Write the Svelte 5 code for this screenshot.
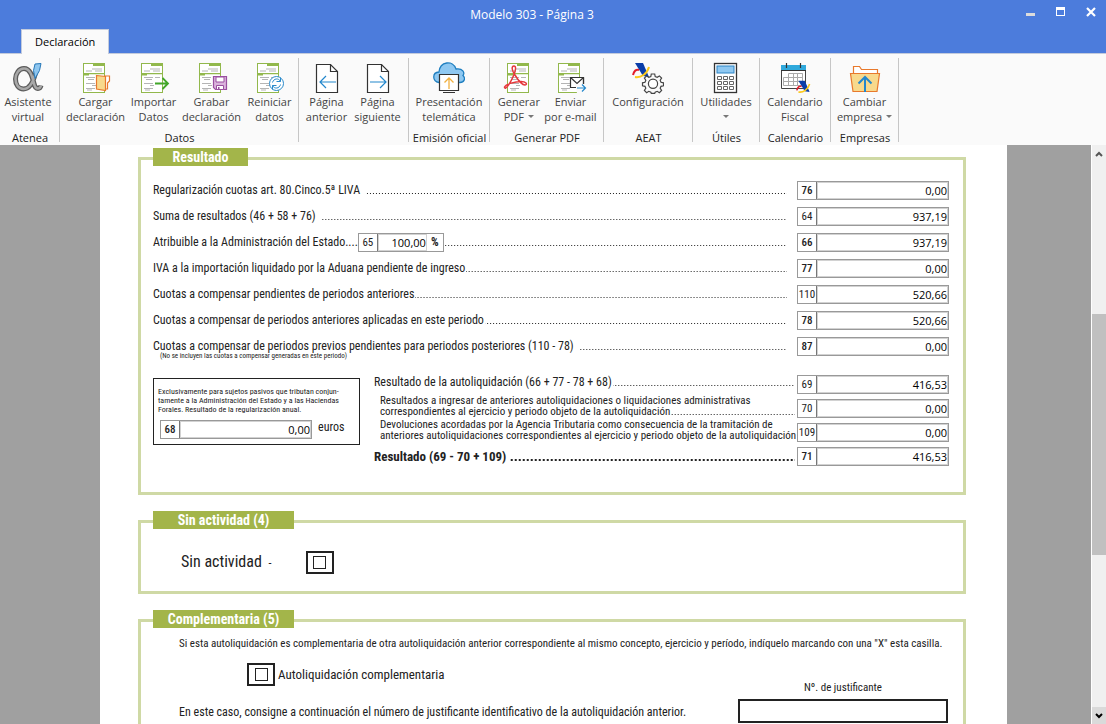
<script>
  const groups = [
    {
      name: "Atenea",
      size: "g60",
      tools: [{ icon: "alpha", lines: ["Asistente", "virtual"] }],
    },
    {
      name: "Datos",
      size: "g239",
      tools: [
        { icon: "load", lines: ["Cargar", "declaración"] },
        { icon: "import", lines: ["Importar", "Datos"] },
        { icon: "save", lines: ["Grabar", "declaración"] },
        { icon: "reset", lines: ["Reiniciar", "datos"] },
      ],
    },
    {
      name: "",
      size: "g110",
      tools: [
        { icon: "prev", lines: ["Página", "anterior"] },
        { icon: "next", lines: ["Página", "siguiente"] },
      ],
    },
    {
      name: "Emisión oficial",
      size: "g81",
      tools: [{ icon: "cloud", lines: ["Presentación", "telemática"] }],
    },
    {
      name: "Generar PDF",
      size: "g114",
      tools: [
        { icon: "pdf", lines: ["Generar", "PDF"], menu: true },
        { icon: "mail", lines: ["Enviar", "por e-mail"] },
      ],
    },
    {
      name: "AEAT",
      size: "g89",
      tools: [{ icon: "config", lines: ["Configuración", ""] }],
    },
    {
      name: "Útiles",
      size: "g67",
      tools: [{ icon: "calc", lines: ["Utilidades", ""], menu: true }],
    },
    {
      name: "Calendario",
      size: "g71",
      tools: [{ icon: "calendar", lines: ["Calendario", "Fiscal"] }],
    },
    {
      name: "Empresas",
      size: "g68",
      tools: [{ icon: "company", lines: ["Cambiar", "empresa"], menu: true }],
    },
  ];

  const results = [
    { box: "76", label: "Regularización cuotas art. 80.Cinco.5ª LIVA", value: "0,00", space: true, strong: true },
    { box: "64", label: "Suma de resultados (46 + 58 + 76)", value: "937,19", space: true },
    { box: "66", label: "Atribuible a la Administración del Estado", value: "937,19", percent: "100,00", strong: true },
    { box: "77", label: "IVA a la importación liquidado por la Aduana pendiente de ingreso", value: "0,00", strong: true },
    { box: "110", label: "Cuotas a compensar pendientes de periodos anteriores", value: "520,66" },
    { box: "78", label: "Cuotas a compensar de periodos anteriores aplicadas en este periodo", value: "520,66", strong: true },
    { box: "87", label: "Cuotas a compensar de periodos previos pendientes para periodos posteriores (110 - 78)", value: "0,00", space: true, strong: true },
  ];

  const totals = [
    { box: "69", lines: ["Resultado de la autoliquidación (66 + 77 - 78 + 68)"], value: "416,53", dots: true },
    {
      box: "70",
      lines: [
        "Resultados a ingresar de anteriores autoliquidaciones o liquidaciones administrativas",
        "correspondientes al ejercicio y periodo objeto de la autoliquidación",
      ],
      value: "0,00",
      dots: true,
    },
    {
      box: "109",
      lines: [
        "Devoluciones acordadas por la Agencia Tributaria como consecuencia de la tramitación de",
        "anteriores autoliquidaciones correspondientes al ejercicio y periodo objeto de la autoliquidación",
      ],
      value: "0,00",
    },
    { box: "71", lines: ["Resultado (69 - 70 + 109)"], value: "416,53", dots: true, final: true },
  ];
</script>

{#snippet sheet()}
  <rect x="3.5" y="1.5" width="21" height="29" fill="#fff" stroke="#92b84c" />
  <path d="M13 1h12v3H13zM4 12h5v1.5H4zM4 11h20v1.2H4z" fill="#92b84c" />
  <path
    d="M12 7h10M6 9h6M15 9h7M6 15.5h9M8 17.5h6M17 15.5h5M6 21.5h9M12 23.5h4M6 26.5h9M7 28h5"
    stroke="#b5b5b5"
    fill="none"
  />
{/snippet}

{#snippet eagle()}
  <path d="M3 1h8l6 14-6-1z" fill="#0a3da8" />
  <path d="M1 13c1-4 3-6 6-5" fill="none" stroke="#e21e2b" stroke-width="2" />
  <path d="M3 15c6 1 12-3 14-10" fill="none" stroke="#fbc91b" stroke-width="2" />
{/snippet}

{#snippet icon(name)}
  <svg class="icon" viewBox="0 0 32 32" aria-hidden="true">
    {#if name === "alpha"}
      <path
        d="M23.5 11c-2 8-5.500 16-12 16C6.500 27 3.500 22.500 3.500 17S7 6.500 12 6.500c6 0 8 7 10 15 .6 3 2 5 4 5 1.500 0 2.500-1 3-3"
        fill="none"
        stroke="#5b5b5b"
        stroke-width="5"
      />
      <path
        d="M23.500 11c-2 8-5.500 16-12 16C6.500 27 3.500 22.500 3.500 17S7 6.500 12 6.500c6 0 8 7 10 15 .6 3 2 5 4 5 1.500 0 2.500-1 3-3"
        fill="none"
        stroke="#a8a8a8"
        stroke-width="2.500"
      />
      <path d="M23 2 29 1.500l-1.500 7-4.500 8-1.500-8z" fill="#8ec6ef" stroke="#2778b8" />
    {:else if name === "load"}
      {@render sheet()}
      <path d="M25 14h4.500v5l-2 2v6H25z" fill="#fff" stroke="#e8792c" stroke-width="1.200" />
      <path d="m16.500 13.500 9 1v14l-9-1.500z" fill="#f8d98c" stroke="#e8792c" stroke-width="1.200" />
    {:else if name === "import"}
      {@render sheet()}
      <path d="M17 21.500h13M24.500 16l5.500 5.500-5.500 5.500" fill="none" stroke="#42a62a" stroke-width="1.800" />
    {:else if name === "save"}
      {@render sheet()}
      <path d="M17.500 14.500h13v13H19.500l-2-2z" fill="#dab3dc" stroke="#9a4fa0" stroke-width="1.200" />
      <path d="M20 15h8v5h-8zM20.500 23.500h7v4h-7z" fill="#fff" stroke="#9a4fa0" />
      <path d="M22 25h1.500v2H22z" fill="#9a4fa0" />
    {:else if name === "reset"}
      {@render sheet()}
      <circle cx="22.500" cy="21.500" r="7" fill="#fff" stroke="#2a8acb" />
      <path
        d="M18.500 20.500c1-4 6-5 8-1M26.500 15.500v4h-4M26.500 22.500c-1 4-6 5-8 1M18.500 27.500v-4h4"
        fill="none"
        stroke="#2a8acb"
      />
    {:else if name === "prev" || name === "next"}
      <path d="M5.500 2.500h14l7 7v21h-21z" fill="#fff" stroke="#333" stroke-width="1.200" />
      <path d="M19.500 2.500v7h7" fill="none" stroke="#333" stroke-width="1.200" />
      {#if name === "prev"}
        <path d="M25 20H9.500M15 14l-6 6 6 6" fill="none" stroke="#2387cc" stroke-width="1.200" />
      {:else}
        <path d="M8 20h15.500M18 14l6 6-6 6" fill="none" stroke="#2387cc" stroke-width="1.200" />
      {/if}
    {:else if name === "cloud"}
      <path
        d="M6 20.500c-7-1.500-7-10 0-10.500 1-11 14-12 17-3 7-1 9 4 7 6.500 3 3 1 7-3 7z"
        fill="#8fc8f1"
        stroke="#1f7fc0"
        stroke-width="1.300"
      />
      <path d="M6.500 12.500h19v16h-19z" fill="#fff" stroke="#333" stroke-width="1.200" />
      <path d="M10 30.500h12" stroke="#333" />
      <path d="M16 27V16.500M11.500 20.500l4.500-4.500 4.500 4.500" fill="none" stroke="#f0b040" stroke-width="1.300" />
    {:else if name === "pdf"}
      <g transform="translate(1 0)">{@render sheet()}</g>
      <path
        d="M11 4c-3 0-2 5 1 9 3 5 7 10 10 10 3-.5 1-3.500-4-3.500C12 19.500 3 22 1.500 25c0 2 2 1.500 4-2C9 18 13 9 12.500 6c0-1.300-.7-2-1.500-2z"
        fill="none"
        stroke="#e5383b"
        stroke-width="1.500"
      />
    {:else if name === "mail"}
      {@render sheet()}
      <path d="M15.500 15.500h13v10h-13z" fill="#fff" stroke="#333" stroke-width="1.200" />
      <path d="m15.500 15.500 6.500 6 6.500-6" fill="none" stroke="#333" stroke-width="1.200" />
      <path d="M20 22h11v9h-9z" fill="#fafafa" />
      <path d="M15.500 25.500H21M28.500 15.500V22" stroke="#333" stroke-width="1.200" />
      <path d="M22 26h8.500M27 22.500l3.500 3.500-3.500 3.500" fill="none" stroke="#2387cc" stroke-width="1.200" />
    {:else if name === "config"}
      {@render eagle()}
      <path
        d="m19.300 12 3.400 0 .5 2.500 2 .8 2.200-1.400 2.200 2.200-1.400 2.200.8 2 2.500.5v3l-2.500.5-.8 2 1.400 2.200-2.200 2.200-2.200-1.400-2 .8-.5 1.200h-3.400l-.5-1.200-2-.8-2.200 1.400-2.200-2.200 1.400-2.200-.8-2-2.500-.5v-3l2.500-.5.8-2-1.400-2.200 2.200-2.200 2.200 1.400 2-.8z"
        fill="#fafafa"
        stroke="#444"
        stroke-width="1.200"
      />
      <circle cx="21" cy="21.800" r="4.600" fill="#fff" stroke="#444" stroke-width="1.200" />
    {:else if name === "calc"}
      <rect x="4.500" y="1.500" width="22" height="29" fill="#fff" stroke="#333" stroke-width="1.300" />
      <rect x="7" y="4" width="17" height="7" fill="#8fc8f1" stroke="#2d84c4" />
      <path
        d="M7.500 14.500h4v3h-4zM13.500 14.500h4v3h-4zM19.500 14.500h4v3h-4zM7.500 19.500h4v3h-4zM13.500 19.500h4v3h-4zM19.500 19.500h4v3h-4zM7.500 24.500h4v3h-4zM13.500 24.500h4v3h-4zM19.500 24.500h4v3h-4z"
        fill="#fff"
        stroke="#666"
      />
    {:else if name === "calendar"}
      <path d="M2.500 4.500h24v22h-24z" fill="#fff" stroke="#444" />
      <path d="M2 3h25v5H2z" fill="#2fa9dc" />
      <path d="M7.500 1v5M21.500 1v5M2 8.500h25" stroke="#333" stroke-width="1.200" />
      <path
        d="M9.500 11.500h14v12h-19v-8h19M4.500 19.500h19M9.500 11.500v12M14.500 11.500v12M18.500 11.500v12M23.500 11.500v8"
        fill="none"
        stroke="#aaa"
      />
      <g transform="translate(17 18) scale(.8)">{@render eagle()}</g>
    {:else if name === "company"}
      <path d="M4.500 14V4.500h6l2 3h16V14" fill="#fff" stroke="#e8792c" stroke-width="1.200" />
      <path d="M1.500 11.500h29l-2.500 18H4z" fill="#f8d98c" stroke="#e8792c" stroke-width="1.200" />
      <path d="M16 30V15M9.500 21.500 16 15l6.500 6.500" fill="none" stroke="#2387cc" stroke-width="2" />
    {/if}
  </svg>
{/snippet}

{#snippet amount(box, value, name, strong)}
  <label class="amount">
    <span class="box" class:strong>{box}</span>
    <input type="text" aria-label={name} {value} />
  </label>
{/snippet}

<div class="window">
  <header class="titlebar">
    <h1>Modelo 303 - Página 3</h1>
    <div class="controls">
      <button type="button" aria-label="Minimizar">
        <svg viewBox="0 0 10 10"><path d="M0 6h9v3H0z" fill="#dcdcdc" /></svg>
      </button>
      <button type="button" aria-label="Maximizar">
        <svg viewBox="0 0 10 10"><path d="M0 0h9v9H0zM1 3v5h7V3z" fill="#fff" fill-rule="evenodd" /></svg>
      </button>
      <button type="button" aria-label="Cerrar">
        <svg viewBox="0 0 10 10"><path d="m1 1 8 8M9 1 1 9" stroke="#fff" stroke-width="2.200" /></svg>
      </button>
    </div>
  </header>

  <nav class="tabs">
    <button type="button" class="tab">Declaración</button>
  </nav>

  <div class="ribbon">
    {#each groups as group}
      <div class="group {group.size}">
        <div class="tools">
          {#each group.tools as tool}
            <button type="button" class="tool">
              {@render icon(tool.icon)}
              <span>{tool.lines[0]}</span>
              <span class="second">
                {tool.lines[1]}
                {#if tool.menu}<i class="caret"></i>{/if}
              </span>
            </button>
          {/each}
        </div>
        <div class="group-name">{group.name}</div>
      </div>
    {/each}
  </div>

  <div class="viewer">
    <main class="page">
      <section class="panel">
        <h2 class="short">Resultado</h2>

        {#each results as row}
          <div class="row">
            <span class="label" class:space={row.space}>{row.label}</span>
            {#if row.percent}
              <span class="brief">....</span>
              <label class="amount percent">
                <span class="box">65</span>
                <input type="text" aria-label="Porcentaje" value={row.percent} />
                <span class="sign">%</span>
              </label>
            {/if}
            <span class="leader"></span>
            {@render amount(row.box, row.value, row.label, row.strong)}
          </div>
        {/each}
        <p class="note">(No se incluyen las cuotas a compensar generadas en este periodo)</p>

        <div class="lower">
          <div class="foral">
            <p>
              Exclusivamente para sujetos pasivos que tributan conjun-<br />
              tamente a la Administración del Estado y a las Haciendas<br />
              Forales. Resultado de la regularización anual.
            </p>
            <div class="foral-row">
              {@render amount("68", "0,00", "Regularización anual", true)}
              <span>euros</span>
            </div>
          </div>

          <div class="totals">
            {#each totals as row}
              <div class="row total" class:final={row.final}>
                <div class="text" class:double={row.lines.length > 1}>
                  {#each row.lines as line, i}
                    <div class="line">
                      <span class="label">{line}</span>
                      {#if row.dots && i === row.lines.length - 1}
                        <span class="leader"></span>
                      {/if}
                    </div>
                  {/each}
                </div>
                {@render amount(row.box, row.value, row.lines.join(" "), row.final)}
              </div>
            {/each}
          </div>
        </div>
      </section>

      <section class="panel">
        <h2>Sin actividad (4)</h2>
        <label class="idle">
          <span>Sin actividad <small>-</small></span>
          <span class="tick"><input type="checkbox" /></span>
        </label>
      </section>

      <section class="panel">
        <h2>Complementaria (5)</h2>
        <div class="extra">
          <p class="intro">
            Si esta autoliquidación es complementaria de otra autoliquidación anterior correspondiente al mismo
            concepto, ejercicio y período, indíquelo marcando con una "X" esta casilla.
          </p>
          <label class="complementary">
            <span class="tick"><input type="checkbox" /></span>
            <span>Autoliquidación complementaria</span>
          </label>
          <div class="receipt">
            <p>En este caso, consigne a continuación el número de justificante identificativo de la autoliquidación anterior.</p>
            <label>
              <span>Nº. de justificante</span>
              <input type="text" />
            </label>
          </div>
        </div>
      </section>
    </main>

    <div class="scrollbar">
      <button type="button" aria-label="Subir">
        <svg viewBox="0 0 8 6"><path d="m1 5 3-3 3 3" fill="none" stroke="#555" stroke-width="2" /></svg>
      </button>
      <div class="track"></div>
      <div class="thumb"></div>
      <div class="track"></div>
      <button type="button" class="down" aria-label="Bajar">
        <svg viewBox="0 0 8 6"><path d="m1 1 3 3 3-3" fill="none" stroke="#000" stroke-width="2" /></svg>
      </button>
    </div>
  </div>
</div>

<style>
  :global(body) {
    background: #a0a0a0;
  }

  * {
    box-sizing: border-box;
    margin: 0;
  }

  button,
  input {
    font: inherit;
    color: inherit;
    padding: 0;
    border: 0;
    border-radius: 0;
    background: none;
  }

  .window {
    display: flex;
    flex-direction: column;
    height: 100vh;
    overflow: hidden;
    font: 11px/15px "Open Sans", "Noto Sans", sans-serif;
  }

  .titlebar {
    display: flex;
    align-items: center;
    flex: none;
    height: 29px;
    padding-left: 48px;
    background: #4c7cdc;
    color: #fff;
  }

  h1 {
    flex: 1;
    font-size: 12px;
    font-weight: 400;
    text-align: center;
  }

  .controls {
    display: flex;
    padding-bottom: 6px;
  }

  .controls button {
    width: 30px;
    height: 24px;
  }

  .controls svg {
    display: block;
    width: 10px;
    height: 10px;
    margin: 0 auto;
  }

  .tabs {
    display: flex;
    flex: none;
    height: 25px;
    padding-left: 21px;
    background: #4c7cdc;
    border-bottom: 1px solid #c3cbdc;
  }

  .tab {
    height: 25px;
    padding: 0 13px 2px;
    background: #fafafa;
    border: 1px solid #c3cbdc;
    border-bottom: 0;
    color: #000;
  }

  .ribbon {
    display: flex;
    flex: none;
    height: 91px;
    padding-top: 4px;
    background: #fafafa;
  }

  .group {
    display: flex;
    flex-direction: column;
    flex: none;
    background: linear-gradient(#c6c6c6, #c6c6c6) right top / 1px 84px no-repeat;
  }

  .g60 { width: 60px; }
  .g67 { width: 67px; }
  .g68 { width: 68px; }
  .g71 { width: 71px; }
  .g81 { width: 81px; }
  .g89 { width: 89px; }
  .g110 { width: 110px; }
  .g114 { width: 114px; }
  .g239 { width: 239px; }

  .tools {
    display: flex;
    justify-content: center;
    padding: 4px 1px 0 0;
    height: 72px;
  }

  .g60 .tools,
  .g110 .tools,
  .g114 .tools {
    padding-right: 4px;
  }

  .g239 .tools {
    padding-left: 7px;
  }

  .tool {
    display: flex;
    flex-direction: column;
    align-items: center;
    flex: none;
    min-width: 51px;
    color: #444;
    white-space: nowrap;
  }

  .g239 .tool {
    width: 58px;
  }

  .icon {
    width: 32px;
    height: 32px;
  }

  .second {
    display: flex;
    align-items: center;
    gap: 4px;
    height: 15px;
  }

  .caret {
    border: 3px solid transparent;
    border-top-color: #777;
    border-bottom: 0;
  }

  .group-name {
    text-align: center;
    white-space: nowrap;
    color: #222;
  }

  .viewer {
    display: flex;
    flex: 1;
    min-height: 0;
    background: #a0a0a0;
  }

  .page {
    flex: 1;
    min-width: 0;
    margin: 0 84px 0 100px;
    padding: 12px 41px 0 38px;
    overflow: hidden;
    background: #fff;
    color: #222;
    font: 12px/16px "Roboto Condensed", "Liberation Sans Narrow", "Liberation Sans", sans-serif;
  }

  .panel {
    margin-bottom: 25px;
    padding: 0 14px 0 12px;
    border: 3px solid #cfd9a5;
  }

  h2 {
    width: 141px;
    height: 18px;
    margin: -12px 0 11px;
    background: #a3b54a;
    color: #fff;
    font-size: 14px;
    line-height: 18px;
    text-align: center;
  }

  h2.short {
    width: 95px;
  }

  .row {
    display: flex;
    align-items: center;
    height: 26px;
  }

  .label {
    flex: none;
    white-space: nowrap;
  }

  .label.space {
    margin-right: 4px;
  }

  /* dotted leader, drawn on the text baseline */
  .leader {
    flex: 1;
    height: 16px;
    margin-left: 1px;
    background: linear-gradient(90deg, #222 1px, transparent 1px) right bottom 4px / 3px 1px repeat-x;
  }

  .amount {
    display: flex;
    flex: none;
    width: 152px;
    height: 19px;
    margin-left: 10px;
    border: 1px solid #999;
    font: 11px/17px "Roboto Condensed", "Liberation Sans Narrow", "Liberation Sans", sans-serif;
  }

  .box {
    flex: none;
    width: 19px;
    border-right: 1px solid #777;
    text-align: center;
  }

  .strong {
    font-weight: 500;
  }

  .amount input {
    flex: 1;
    min-width: 0;
    border: 1px solid #d2d2d2;
    color: #000;
    font: 11px/15px "Open Sans", "Noto Sans", sans-serif;
    text-align: right;
  }

  .percent {
    width: 86px;
    margin-left: 0;
  }

  .sign {
    width: 16px;
    font-size: 12px;
    font-weight: 700;
    text-align: center;
  }

  .note {
    height: 8px;
    margin: -7px 0 0 7px;
    font-size: 7px;
    line-height: 8px;
    white-space: nowrap;
  }

  .lower {
    display: flex;
    align-items: flex-start;
    gap: 14px;
    padding: 12px 0 24px;
  }

  .foral {
    flex: none;
    width: 207px;
    height: 67px;
    margin-top: 6px;
    padding: 8px 4px 0;
    border: 1px solid #222;
    font-size: 8px;
    line-height: 9px;
    white-space: nowrap;
  }

  .foral-row {
    display: flex;
    gap: 6px;
    padding: 6px 2px 0;
    font-size: 12px;
    line-height: 15px;
  }

  .foral-row .amount {
    margin-left: 0;
  }

  .totals {
    flex: 1;
    min-width: 0;
  }

  .total {
    height: 24px;
  }

  .total .amount {
    margin-left: 2px;
  }

  .text {
    flex: 1;
    min-width: 0;
    padding-bottom: 4px;
  }

  .double {
    padding-left: 6px;
    font-size: 11px;
    line-height: 11px;
  }

  .double .leader {
    height: 11px;
    background-position: right bottom 2px;
  }

  .line {
    display: flex;
  }

  .final .text {
    padding: 2px 0 0;
    font-size: 13px;
    font-weight: 700;
  }

  .final .leader {
    margin-left: 4px;
    background: linear-gradient(90deg, #222 2px, transparent 2px) right bottom 4px / 4px 2px repeat-x;
  }

  .tick {
    display: flex;
    align-items: center;
    justify-content: center;
    width: 28px;
    height: 23px;
    border: 2px solid #222;
  }

  .tick input {
    appearance: none;
    width: 13px;
    height: 13px;
    border: 1px solid #222;
    background: #fff;
  }

  .idle {
    display: flex;
    align-items: center;
    gap: 34px;
    padding: 10px 0 16px 28px;
    font-size: 16px;
    line-height: 23px;
  }

  .idle small {
    padding-left: 3px;
    font-size: 12px;
  }

  .extra {
    padding: 0 1px 0 26px;
  }

  .intro {
    margin-top: -3px;
    font-size: 11px;
    white-space: nowrap;
  }

  .complementary {
    display: flex;
    align-items: center;
    gap: 3px;
    padding: 11px 0 0 68px;
    font-size: 13px;
  }

  .receipt {
    display: flex;
    align-items: flex-end;
    justify-content: space-between;
    margin-top: -6px;
    padding-bottom: 20px;
  }

  .receipt label {
    display: flex;
    flex-direction: column;
    align-items: center;
    gap: 3px;
    width: 210px;
    font-size: 11px;
  }

  .receipt p {
    padding-bottom: 3px;
    white-space: nowrap;
  }

  .receipt input {
    width: 100%;
    height: 24px;
    border: 2px solid #222;
  }

  .scrollbar {
    display: flex;
    flex-direction: column;
    flex: none;
    width: 15px;
    border-left: 1px solid #fff;
    background: #f0f0f0;
  }

  .scrollbar button {
    height: 17px;
  }

  .scrollbar .down {
    background: #dadada;
  }

  .scrollbar svg {
    display: block;
    width: 8px;
    height: 6px;
    margin: 0 auto;
  }

  .track {
    flex: 152;
  }

  .thumb {
    flex: 242;
    background: #c0c0c0;
  }
</style>
